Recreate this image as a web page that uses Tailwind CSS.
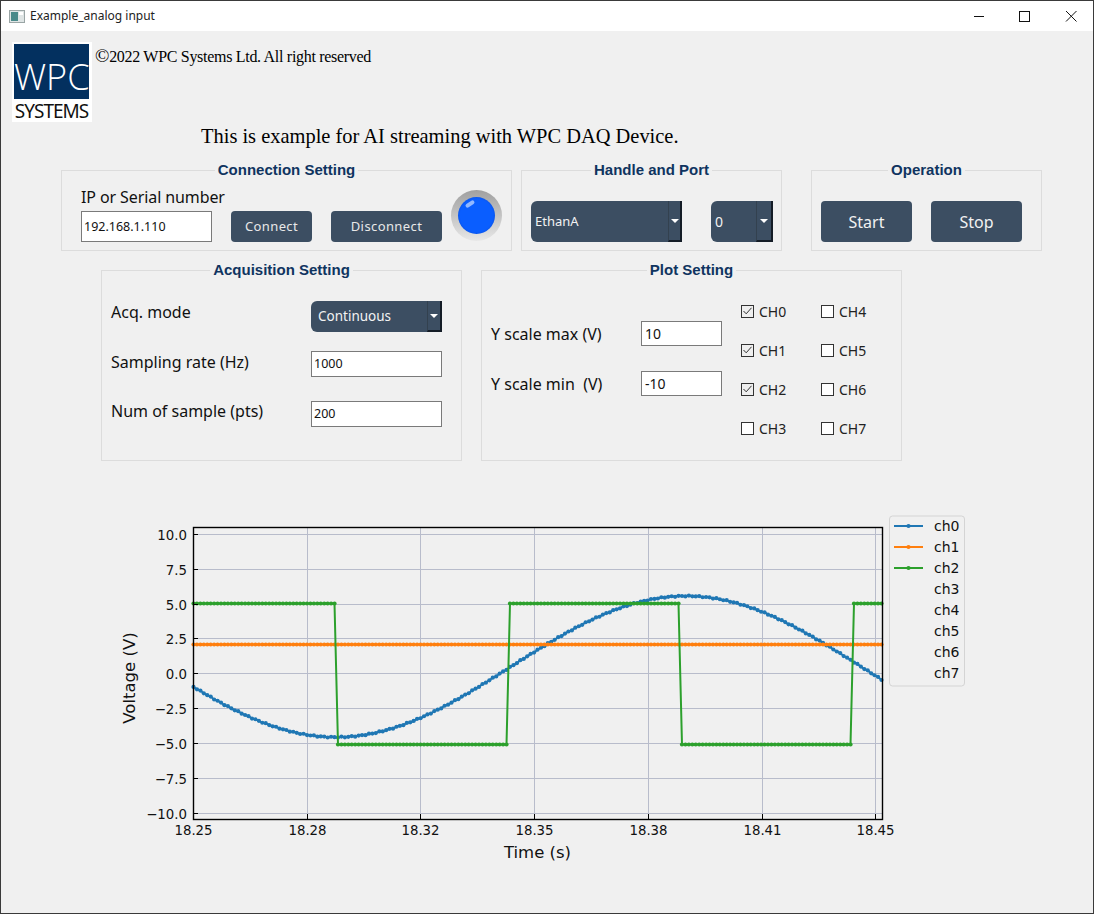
<!DOCTYPE html>
<html>
  <head>
    <meta charset="utf-8" />
    <title>Example_analog input</title>
    <script src="https://cdn.jsdelivr.net/npm/@tailwindcss/browser@4"></script>
  </head>

  <body class="bg-[#f0f0f0] font-['Noto_Sans',sans-serif] text-[#111]">
    <div class="w-[1094px] h-[914px] overflow-hidden border border-[#3a3a3a] flex flex-col">
      <!-- Title bar -->
      <header class="h-[30px] shrink-0 bg-white flex items-center pl-[8px] text-[12px] text-[#222]">
        <svg width="16" height="13" viewBox="0 0 16 13" class="mr-[5px]">
          <rect x="0.5" y="0.5" width="15" height="12" fill="#dfe5e5" stroke="#9aa5a5" />
          <rect x="2" y="2" width="7" height="9" fill="#4a8a8a" />
          <rect x="10" y="2" width="4" height="3" fill="#fff" />
        </svg>
        <span>Example_analog input</span>
        <div class="ml-auto flex items-center h-full">
          <svg width="46" height="30" viewBox="0 0 46 30"><path d="M18 15.5H28" stroke="#111" /></svg>
          <svg width="46" height="30" viewBox="0 0 46 30"><rect x="17.5" y="10.5" width="10" height="10" fill="none" stroke="#111" /></svg>
          <svg width="46" height="30" viewBox="0 0 46 30" class="mr-[-1px]"><path d="M18 10L28.5 20.5M28.5 10L18 20.5" stroke="#111" /></svg>
        </div>
      </header>

      <!-- Logo and copyright -->
      <div class="flex items-start pl-[11px] pt-[11px]">
        <div class="w-[80px] h-[80px] bg-white pt-[2px] pl-[2px] flex flex-col">
          <div class="shrink-0 w-[75px] h-[55px] pt-[13px] bg-[#03305f] text-white text-[36px] leading-[40px] font-['Open_Sans',sans-serif] font-light text-center">WPC</div>
          <div class="shrink-0 w-[75px] mt-[2px] text-[19px] leading-[21px] text-center text-[#111] tracking-[-1px]">SYSTEMS</div>
        </div>
        <p class="ml-[3px] mt-[4px] font-['Liberation_Serif',serif] text-[16px] leading-[22px] tracking-[-0.3px] text-black"><span class="text-[19px] leading-none">©</span>2022 WPC Systems Ltd. All right reserved</p>
      </div>

      <h1 class="ml-[200px] font-['Liberation_Serif',serif] text-[20.45px] leading-[28px] text-black">This is example for AI streaming with WPC DAQ Device.</h1>

      <!-- Top row of group boxes -->
      <div class="flex ml-[60px] mt-[20px]">
        <section class="relative w-[451px] h-[81px] border border-[#dcdcdc] pl-[19px]">
          <div class="absolute -top-[10px] left-0 right-0 text-center font-['Liberation_Sans',sans-serif] font-bold text-[15px] leading-[18px] text-[#0f3460]"><span class="bg-[#f0f0f0] px-[3px]">Connection Setting</span></div>
          <p class="mt-[15px] text-[16px] leading-[22px] tracking-[-0.1px]">IP or Serial number</p>
          <div class="flex items-center mt-[3px]">
            <input value="192.168.1.110" class="w-[131px] h-[31px] bg-white border border-[#7a7a7a] px-[2px] text-[12.5px] text-[#111] font-['Noto_Sans',sans-serif]" />
            <button class="ml-[19px] w-[81px] h-[31px] rounded-[4px] bg-[#3c4e62] text-[#e8e8e8] text-[13px] tracking-[0.4px]">Connect</button>
            <button class="ml-[19px] w-[111px] h-[31px] rounded-[4px] bg-[#3c4e62] text-[#e8e8e8] text-[13px] tracking-[0.4px]">Disconnect</button>
            <div class="ml-[9px] -mt-[23px] w-[51px] h-[51px] rounded-full bg-linear-to-b from-[#a0a0a0] to-[#e8e8e8] flex items-center justify-center">
              <div class="relative w-[37px] h-[37px] rounded-full bg-[radial-gradient(circle_at_50%_50%,#0a5eff_62%,#0a3fb8_100%)]">
                <div class="absolute left-[7px] top-[5px] w-[10px] h-[4px] -rotate-[35deg] rounded-full bg-[#b4ceff]/80"></div>
              </div>
            </div>
          </div>
        </section>

        <section class="relative ml-[9px] w-[261px] h-[81px] border border-[#dcdcdc] pl-[9px] pt-[30px]">
          <div class="absolute -top-[10px] left-0 right-0 text-center font-['Liberation_Sans',sans-serif] font-bold text-[15px] leading-[18px] text-[#0f3460]"><span class="bg-[#f0f0f0] px-[3px]">Handle and Port</span></div>
          <div class="flex items-start">
            <div class="w-[151px] h-[41px] rounded-l-[6px] bg-[#3c4e62] flex items-center pl-[4px] text-[#f2f2f2] text-[13px]">
              <span>EthanA</span>
              <span class="ml-auto w-[14px] h-full border-l border-[#33414f] border-r-2 border-b-2 border-r-[#141c26] border-b-[#141c26] flex items-center justify-center">
                <svg width="8" height="4" viewBox="0 0 8 4"><path d="M0 0H8L4 4Z" fill="#fff" /></svg>
              </span>
            </div>
            <div class="ml-[29px] w-[62px] h-[41px] rounded-l-[6px] bg-[#3c4e62] flex items-center pl-[4px] text-[#f2f2f2] text-[14px]">
              <span>0</span>
              <span class="ml-auto w-[17px] h-full border-l border-[#33414f] border-r-2 border-b-2 border-r-[#141c26] border-b-[#141c26] flex items-center justify-center">
                <svg width="8" height="4" viewBox="0 0 8 4"><path d="M0 0H8L4 4Z" fill="#fff" /></svg>
              </span>
            </div>
          </div>
        </section>

        <section class="relative ml-[29px] w-[231px] h-[81px] border border-[#dcdcdc] pl-[9px] pt-[30px]">
          <div class="absolute -top-[10px] left-0 right-0 text-center font-['Liberation_Sans',sans-serif] font-bold text-[15px] leading-[18px] text-[#0f3460]"><span class="bg-[#f0f0f0] px-[3px]">Operation</span></div>
          <div class="flex gap-[19px]">
            <button class="w-[91px] h-[41px] rounded-[4px] bg-[#3c4e62] text-[#f2f2f2] text-[16px]">Start</button>
            <button class="w-[91px] h-[41px] rounded-[4px] bg-[#3c4e62] text-[#f2f2f2] text-[16px]">Stop</button>
          </div>
        </section>
      </div>

      <!-- Second row of group boxes -->
      <div class="flex ml-[100px] mt-[19px] gap-[19px]">
        <section class="relative w-[361px] h-[191px] border border-[#dcdcdc] pl-[9px] pt-[30px]">
          <div class="absolute -top-[10px] left-0 right-0 text-center font-['Liberation_Sans',sans-serif] font-bold text-[15px] leading-[18px] text-[#0f3460]"><span class="bg-[#f0f0f0] px-[3px]">Acquisition Setting</span></div>
          <div class="flex items-start h-[50px]">
            <label class="w-[200px] text-[16px] leading-[22px]">Acq. mode</label>
            <div class="w-[131px] h-[31px] rounded-l-[6px] bg-[#3c4e62] flex items-center pl-[7px] text-[#f2f2f2] text-[13.5px]">
              <span>Continuous</span>
              <span class="ml-auto w-[15px] h-full border-l border-[#33414f] border-r-2 border-b-2 border-r-[#141c26] border-b-[#141c26] flex items-center justify-center">
                <svg width="8" height="4" viewBox="0 0 8 4"><path d="M0 0H8L4 4Z" fill="#fff" /></svg>
              </span>
            </div>
          </div>
          <div class="flex items-center h-[26px] mb-[24px]">
            <label class="w-[200px] text-[16px] leading-[22px] -mt-[4px]">Sampling rate (Hz)</label>
            <input value="1000" class="w-[131px] h-[26px] bg-white border border-[#7a7a7a] px-[2px] pb-[2px] text-[12.5px] text-[#111]" />
          </div>
          <div class="flex items-center h-[26px]">
            <label class="w-[200px] text-[16px] leading-[22px] -mt-[7px]">Num of sample (pts)</label>
            <input value="200" class="w-[131px] h-[26px] bg-white border border-[#7a7a7a] px-[2px] pb-[2px] text-[12.5px] text-[#111]" />
          </div>
        </section>

        <section class="relative w-[421px] h-[191px] border border-[#dcdcdc] pl-[9px] flex">
          <div class="absolute -top-[10px] left-0 right-0 text-center font-['Liberation_Sans',sans-serif] font-bold text-[15px] leading-[18px] text-[#0f3460]"><span class="bg-[#f0f0f0] px-[3px]">Plot Setting</span></div>
          <div class="w-[231px] pt-[50px] shrink-0">
            <div class="flex items-center h-[25px] mb-[25px]">
              <label class="w-[150px] text-[16px] leading-[22px]">Y scale max (V)</label>
              <input value="10" class="w-[81px] h-[25px] bg-white border border-[#7a7a7a] px-[3px] text-[14px] text-[#111]" />
            </div>
            <div class="flex items-center h-[25px]">
              <label class="w-[150px] text-[16px] leading-[22px] whitespace-pre">Y scale min  (V)</label>
              <input value="-10" class="w-[81px] h-[25px] bg-white border border-[#7a7a7a] px-[3px] text-[14px] text-[#111]" />
            </div>
          </div>
          <div class="ml-[19px] pt-[30px] grid grid-cols-[80px_80px] grid-rows-[repeat(4,39px)] grid-flow-col text-[14px] text-[#222]">
            <div class="flex items-center h-[20px] gap-[5px]"><span class="w-[13px] h-[13px] border border-[#333] bg-[#efefef] flex items-center justify-center"><svg width="9" height="8" viewBox="0 0 9 8"><path d="M0.5 4L3.2 6.8L8.5 0.8" fill="none" stroke="#333" /></svg></span>CH0</div>
            <div class="flex items-center h-[20px] gap-[5px]"><span class="w-[13px] h-[13px] border border-[#333] bg-[#efefef] flex items-center justify-center"><svg width="9" height="8" viewBox="0 0 9 8"><path d="M0.5 4L3.2 6.8L8.5 0.8" fill="none" stroke="#333" /></svg></span>CH1</div>
            <div class="flex items-center h-[20px] gap-[5px]"><span class="w-[13px] h-[13px] border border-[#333] bg-[#efefef] flex items-center justify-center"><svg width="9" height="8" viewBox="0 0 9 8"><path d="M0.5 4L3.2 6.8L8.5 0.8" fill="none" stroke="#333" /></svg></span>CH2</div>
            <div class="flex items-center h-[20px] gap-[5px]"><span class="w-[13px] h-[13px] border border-[#333] bg-white"></span>CH3</div>
            <div class="flex items-center h-[20px] gap-[5px]"><span class="w-[13px] h-[13px] border border-[#333] bg-white"></span>CH4</div>
            <div class="flex items-center h-[20px] gap-[5px]"><span class="w-[13px] h-[13px] border border-[#333] bg-white"></span>CH5</div>
            <div class="flex items-center h-[20px] gap-[5px]"><span class="w-[13px] h-[13px] border border-[#333] bg-white"></span>CH6</div>
            <div class="flex items-center h-[20px] gap-[5px]"><span class="w-[13px] h-[13px] border border-[#333] bg-white"></span>CH7</div>
          </div>
        </section>
      </div>

      <!-- Plot: svg coordinates are page x, page y - 510 -->
      <svg id="plot" width="1092" height="370" viewBox="1 510 1092 370" class="mt-[49px] shrink-0 font-['DejaVu_Sans',sans-serif]">
        <g id="grid" stroke="#b8bccb" stroke-width="1"></g>
        <g id="curves" fill="none"></g>
        <rect x="193.5" y="527.5" width="689" height="292" fill="none" stroke="#000" stroke-width="1.4" />
        <g id="labels" fill="#111" font-size="13.33"></g>
        <text x="537.5" y="858" text-anchor="middle" font-size="16.5" fill="#111">Time (s)</text>
        <text transform="translate(135 678) rotate(-90)" text-anchor="middle" font-size="16.5" fill="#111">Voltage (V)</text>
        <rect x="889.5" y="516" width="75" height="170" rx="3" fill="#f0f0f0" stroke="#d4d4d4" />
        <g id="legend" font-size="14" fill="#111"></g>
      </svg>
    </div>

    <script>
      const NS = "http://www.w3.org/2000/svg";
      const add = (parent, tag, attrs, text) => {
        const el = document.createElementNS(NS, tag);
        Object.entries(attrs).forEach(([k, v]) => el.setAttribute(k, v));
        if (text) el.textContent = text;
        parent.appendChild(el);
      };

      const grid = document.getElementById("grid");
      const labels = document.getElementById("labels");

      // y axis
      [10, 7.5, 5, 2.5, 0, -2.5, -5, -7.5, -10].forEach((v) => {
        const y = Math.round(673.3 - 13.93 * v) + 0.5;
        add(grid, "path", { d: `M193 ${y}H882` });
        add(labels, "path", { d: `M193 ${y}h5`, stroke: "#000" });
        const txt = (v < 0 ? "\u2212" : "") + Math.abs(v).toFixed(1);
        add(labels, "text", { x: 187, y: y + 5, "text-anchor": "end" }, txt);
      });

      // x axis
      ["18.25", "18.28", "18.32", "18.35", "18.38", "18.41", "18.45"].forEach((t, i) => {
        const x = Math.round(193 + 113.7 * i) + 0.5;
        if (i > 0) add(grid, "path", { d: `M${x} 527V819` });
        add(labels, "path", { d: `M${x} 819v-5`, stroke: "#000" });
        add(labels, "text", { x: x, y: 835, "text-anchor": "middle" }, t);
      });

      // square wave edges fall between two samples
      const square = (x) => {
        if (x <= 335.8) return 603.5;
        if (x <= 507.5) return 744.5;
        if (x <= 680.5) return 603.5;
        if (x <= 853) return 744.5;
        return 603.5;
      };
      const series = [
        { color: "#1f77b4", y: (x, i) => 666.6 - 70.6 * Math.sin((2 * Math.PI * (x - 511)) / 700) + Math.sin(i * 2.3) * 0.5 },
        { color: "#ff7f0e", y: () => 644.5 },
        { color: "#2ca02c", y: square },
      ];

      const curves = document.getElementById("curves");
      series.forEach((s) => {
        let d = "";
        const dots = [];
        for (let i = 0; i <= 200; i++) {
          const x = 193.5 + i * 3.44;
          const y = s.y(x, i);
          d += `${i ? "L" : "M"}${x.toFixed(1)} ${y.toFixed(1)}`;
          dots.push([x, y]);
        }
        add(curves, "path", { d: d, stroke: s.color, "stroke-width": 2 });
        dots.forEach(([x, y]) => add(curves, "circle", { cx: x, cy: y, r: 2.1, fill: s.color }));
      });

      const legend = document.getElementById("legend");
      for (let i = 0; i < 8; i++) {
        const y = 526 + i * 21;
        if (series[i]) {
          add(legend, "path", { d: `M894 ${y}H923`, stroke: series[i].color, "stroke-width": 2 });
          add(legend, "circle", { cx: 908.5, cy: y, r: 2.1, fill: series[i].color });
        }
        add(legend, "text", { x: 934, y: y + 5 }, "ch" + i);
      }
    </script>
  </body>
</html>
